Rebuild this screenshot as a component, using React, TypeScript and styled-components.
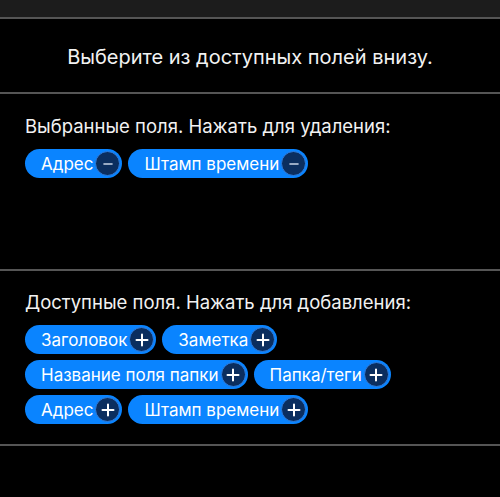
import React, { useState } from "react";
import styled, { createGlobalStyle } from "styled-components";

const GlobalStyle = createGlobalStyle`
  html, body {
    margin: 0;
    padding: 0;
    background: #000;
  }
  body {
    font-family: Inter, "Noto Sans", sans-serif;
    color: #f2f2f2;
  }
`;

const Page = styled.div`
  display: flex;
  flex-direction: column;
  min-height: 497px;
  background: #000;
`;

const TopBar = styled.div`
  height: 17px;
  background: #1c1c1c;
  border-bottom: 2px solid #555;
`;

const Header = styled.div`
  height: 75px;
  box-sizing: border-box;
  padding-top: 3px;
  display: flex;
  align-items: center;
  justify-content: center;
  font-size: 20px;
  border-bottom: 2px solid #555;
`;

const Section = styled.section<{ $minHeight: number; $top: number }>`
  min-height: ${(p) => p.$minHeight}px;
  box-sizing: border-box;
  padding: ${(p) => p.$top}px 25px 20px;
  border-bottom: 2px solid #555;
`;

const Title = styled.div`
  font-size: 18.5px;
  line-height: 23px;
  margin-bottom: 11px;
`;

const ChipList = styled.div`
  display: flex;
  flex-wrap: wrap;
  gap: 6px;
`;

const Chip = styled.button`
  display: inline-flex;
  align-items: center;
  height: 29px;
  padding: 0 2px 0 16px;
  gap: 2px;
  border: none;
  border-radius: 15px;
  background: #0a84ff;
  color: #fff;
  font-family: inherit;
  font-size: 17px;
  cursor: pointer;
`;

const Badge = styled.span`
  display: flex;
  align-items: center;
  justify-content: center;
  width: 25px;
  height: 25px;
  box-sizing: border-box;
  border-radius: 50%;
  background: #0b2e5f;
  border: 1px solid #2f7ee0;
  svg {
    width: 14px;
    height: 14px;
  }
`;

const PlusIcon = () => (
  <svg viewBox="0 0 14 14" fill="none" stroke="#fff" strokeWidth="2" strokeLinecap="round">
    <path d="M7 1.5v11M1.5 7h11" />
  </svg>
);

const MinusIcon = () => (
  <svg viewBox="0 0 14 14" fill="none" stroke="#c8d4e6" strokeWidth="1.6" strokeLinecap="round">
    <path d="M3 7h8" />
  </svg>
);

const ALL = [
  "Заголовок",
  "Заметка",
  "Название поля папки",
  "Папка/теги",
  "Адрес",
  "Штамп времени",
];

const App = () => {
  const [selected, setSelected] = useState<string[]>(["Адрес", "Штамп времени"]);

  const remove = (name: string) => setSelected(selected.filter((s) => s !== name));
  const add = (name: string) => {
    if (!selected.includes(name)) setSelected([...selected, name]);
  };

  return (
    <Page>
      <GlobalStyle />
      <TopBar />
      <Header>Выберите из доступных полей внизу.</Header>
      <Section $minHeight={177} $top={21}>
        <Title>Выбранные поля. Нажать для удаления:</Title>
        <ChipList>
          {selected.map((name) => (
            <Chip key={name} onClick={() => remove(name)}>
              {name}
              <Badge>
                <MinusIcon />
              </Badge>
            </Chip>
          ))}
        </ChipList>
      </Section>
      <Section $minHeight={0} $top={20}>
        <Title>Доступные поля. Нажать для добавления:</Title>
        <ChipList>
          {ALL.map((name) => (
            <Chip key={name} onClick={() => add(name)}>
              {name}
              <Badge>
                <PlusIcon />
              </Badge>
            </Chip>
          ))}
        </ChipList>
      </Section>
    </Page>
  );
};

export default App;
